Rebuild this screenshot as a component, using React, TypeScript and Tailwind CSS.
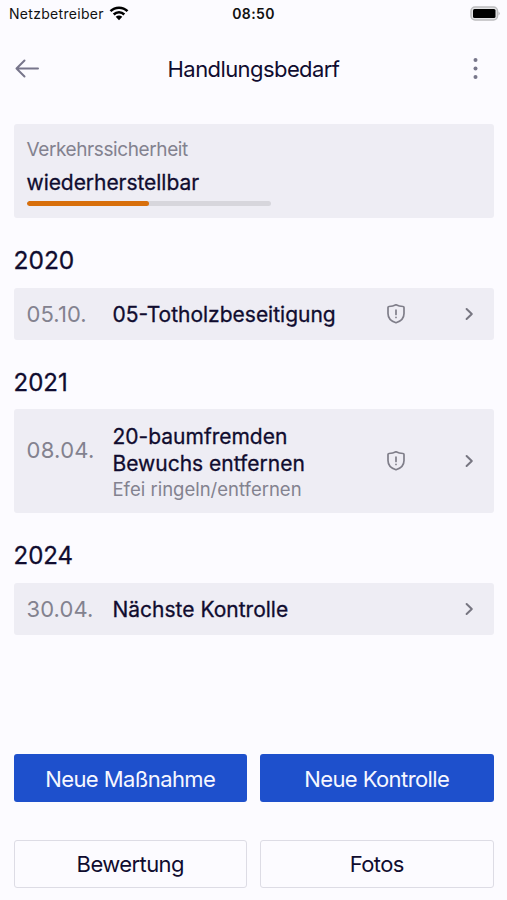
import React from "react";

const ink = "text-[#100c2f]";
const muted = "text-[#83828f]";
const strong = "font-normal [-webkit-text-stroke:0.3px_#100c2f]";

function ShieldIcon() {
  return (
    <svg width="20" height="22" viewBox="0 0 20 22" fill="none" stroke="#7f7e89" strokeWidth="1.7" strokeLinecap="round" strokeLinejoin="round">
      <path d="M10 1.800C12.200 3 14.700 3.500 17 3.500Q18 3.500 18 4.500V10.500C18 15.500 14.500 18.400 10 19.800C5.500 18.400 2 15.500 2 10.500V4.500Q2 3.500 3 3.500C5.300 3.500 7.800 3 10 1.800Z" />
      <path d="M10 7.200V11.400M10 14.300V14.400" />
    </svg>
  );
}

function Chevron() {
  return (
    <svg width="10" height="14" viewBox="0 0 10 14" fill="none" stroke="#777681" strokeWidth="2" strokeLinecap="round" strokeLinejoin="round">
      <path d="M2.600 2L7.800 7L2.600 12" />
    </svg>
  );
}

interface RowProps {
  date: React.ReactNode;
  children: React.ReactNode;
  shield?: boolean;
  height: string;
}

function Row({ date, children, shield, height }: RowProps) {
  return (
    <div className={`flex items-center rounded-[3px] bg-[#eeedf4] pl-[13px] pr-5 ${height}`}>
      <div className={`w-[86px] shrink-0 text-[22px] leading-7 tracking-[0.1px] ${muted}`}>{date}</div>
      <div className="flex-1 pt-[2px]">{children}</div>
      <div className="mr-[58px] flex w-[20px] shrink-0">{shield && <ShieldIcon />}</div>
      <Chevron />
    </div>
  );
}

export default function App() {
  return (
    <main className={`flex h-[900px] w-full flex-col overflow-hidden bg-[#fcfbff] font-['Inter','Liberation_Sans',sans-serif] ${ink}`}>
      <div className="grid h-7 shrink-0 grid-cols-3 items-center pl-[9px] pr-[7px] text-[#111]">
        <div className="flex items-center gap-[5px] text-[14px] leading-5">
          <span className="tracking-[0.3px]">Netzbetreiber</span>
          <svg width="20" height="16" viewBox="0 0 20 16" fill="none" stroke="black" strokeWidth="2.500">
            <path d="M1.500 5.200C6.200 0.500 13.800 0.500 18.500 5.200M4.700 8.500C7.700 5.500 12.300 5.500 15.300 8.500" />
            <path d="M6.700 10.800Q10 8.100 13.300 10.800L10 14.200Z" fill="black" stroke="none" />
          </svg>
        </div>
        <div className="pr-[2px] text-center text-[14px] font-semibold leading-5 tracking-[0.4px]">08:50</div>
        <svg className="mb-[2px] justify-self-end" width="30" height="15" viewBox="0 0 30 15">
          <rect x="1" y="1" width="26.500" height="13" rx="4" fill="#e4e4e6" stroke="#bcbcbe" strokeWidth="1.500" />
          <rect x="3" y="3" width="22.500" height="9" rx="1.500" fill="black" />
          <path d="M28.500 5.500Q31 7.500 28.500 9.500Z" fill="#b7b7b9" />
        </svg>
      </div>

      <header className="flex h-[82px] shrink-0 items-center justify-between px-[14px]">
        <svg width="28" height="24" viewBox="0 0 28 24" fill="none" stroke="#77758b" strokeWidth="2" strokeLinecap="round" strokeLinejoin="round">
          <path d="M24 11.500H2.500M10.500 3.500L2.500 11.500L10.500 19.500" />
        </svg>
        <h1 className="text-[22px] leading-7 tracking-[-0.58px]">Handlungsbedarf</h1>
        <svg width="28" height="24" viewBox="0 0 28 24" fill="#77768a">
          <circle cx="10.500" cy="3" r="2" />
          <circle cx="10.500" cy="11.500" r="2" />
          <circle cx="10.500" cy="20" r="2" />
        </svg>
      </header>

      <div className="flex flex-1 flex-col px-[13.500px] pt-[14px]">
        <section className="h-[94px] rounded-[3px] bg-[#eeedf4] px-[13px] pt-[14px]">
          <div className={`text-[19px] leading-6 tracking-[-0.4px] ${muted}`}>Verkehrssicherheit</div>
          <div className={`mt-[7px] text-[21px] leading-7 tracking-[-0.05px] ${strong}`}>wiederherstellbar</div>
          <div className="mt-[3.500px] h-[5px] w-[244px] overflow-hidden rounded-full bg-[#d7d6dc]">
            <div className="h-full w-1/2 rounded-full bg-[#d86f0b]" />
          </div>
        </section>

        <h2 className={`mt-[26px] h-[44px] text-[24.500px] leading-8 ${strong}`}>2020</h2>
        <Row height="h-[52px]" date="05.10." shield>
          <div className={`text-[21px] leading-7 ${strong}`}>05-Totholzbeseitigung</div>
        </Row>

        <h2 className={`mt-[26px] h-[43px] pt-px text-[24px] leading-8 ${strong}`}>2021</h2>
        <Row height="h-[104px]" date={<span className="block pb-[22px] tracking-[0.3px]">08.04.</span>} shield>
          <div className={`text-[21px] leading-[27px] ${strong}`}>20-baumfremden<br />Bewuchs entfernen</div>
          <div className={`text-[18.500px] leading-6 ${muted}`}>Efei ringeln/entfernen</div>
        </Row>

        <h2 className={`mt-[26px] h-[44px] pt-px text-[24px] leading-8 ${strong}`}>2024</h2>
        <Row height="h-[52px]" date="30.04.">
          <div className={`text-[21px] leading-7 ${strong}`}>Nächste Kontrolle</div>
        </Row>

        <div className="mt-auto grid grid-cols-2 gap-x-[13px] gap-y-[38px] pb-3 text-[22px] tracking-[-0.58px]">
          <button className="h-12 rounded-[3px] bg-[#1e50cc] pt-[2px] text-[#f6f7ff]">Neue Maßnahme</button>
          <button className="h-12 rounded-[3px] bg-[#1e50cc] pt-[2px] text-[#f6f7ff]">Neue Kontrolle</button>
          <button className="h-12 rounded-[3px] border border-[#dddce5]">Bewertung</button>
          <button className="h-12 rounded-[3px] border border-[#dddce5]">Fotos</button>
        </div>
      </div>
    </main>
  );
}
